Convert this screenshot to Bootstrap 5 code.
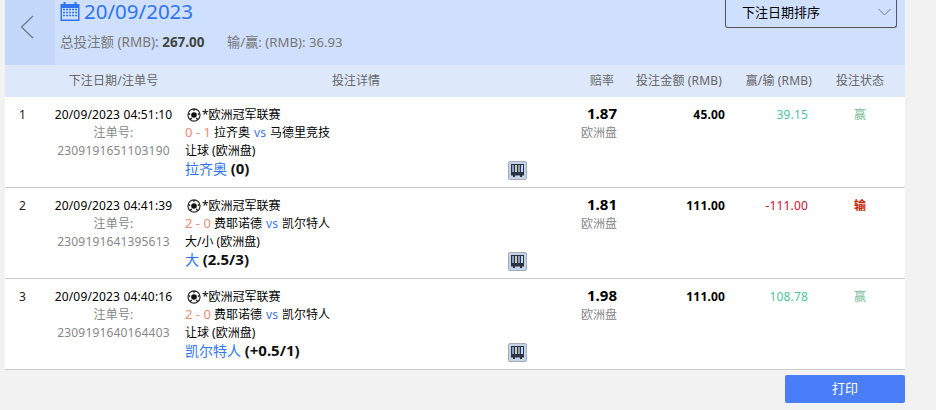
<!DOCTYPE html>
<html lang="zh"><head><meta charset="utf-8">
<link href="https://cdn.jsdelivr.net/npm/bootstrap@5.3.0/dist/css/bootstrap.min.css" rel="stylesheet">
<style>
html,body{height:100%;overflow:hidden}
body{background:#f2f2f2;font-family:"Noto Sans","Noto Sans CJK SC",sans-serif;font-size:12px;line-height:18px;color:#000}
.shell{width:900px;margin-left:5px}
.hero{height:65px;background:#cfe0fe}
.backbtn{width:50px;background:#c3d8fa;padding:0 6px 12px 0}
.main-col{padding-left:5px}
.herotitle{color:#2e74f0;font-size:20.5px;line-height:22px}
.herostats{color:#777;font-size:13.5px;line-height:20px;margin-top:10px}
.herostats b{color:#444;margin-right:19px}
.herostats i{font-style:normal;font-size:13.2px}
.sorter{width:172px;height:28px;border:1px solid #555;border-top:0;border-radius:0 0 3px 3px;margin-right:8px;padding:0 5px 3px 16px;font-size:13px}
.cols{display:grid;grid-template-columns:37px 143px 342px 93px 105px 90px 90px}
.headrow{height:32px;background:#dde8fb;color:#666;line-height:32px}
.betrow{height:91px;background:#fff;border-bottom:1px solid #ccc;padding-top:9px}
.idx{padding-left:14px;color:#222}
.muted{color:#888}
.num{letter-spacing:.16px}
.sc{color:#f08a70;font-size:13px;line-height:1}
.vs{color:#3a78e8;font-size:12px;margin:0 1px;line-height:1}
.pick{color:#2e74f0;font-size:14px;line-height:18px}
.pick b{color:#111;font-size:15px;line-height:1}
.detail{position:relative}
.ballico{margin-left:2px;margin-right:1px;vertical-align:-3px}
.tvbtn{position:absolute;right:0;bottom:7px;width:19px;height:19px;display:block}
.odd{font-size:15px;font-weight:700;line-height:18px;margin-top:-2px;margin-bottom:2px}
.won{color:#4fc3a0}.lost{color:#c8102e}
.st-won{color:#7fbf9f}.st-lost{color:#c81f00;font-weight:600}
.pr1{padding-right:3px}.pr6{padding-right:6px}.pr7{padding-right:7px}
.printrow{margin-top:5px}
.printbtn{width:120px;height:28px;background:#4a7ef8;border:0;border-radius:2px;font-size:13px;color:#fff;padding:0}
.printbtn:hover{background:#4a7ef8;color:#fff}
</style></head><body>
<svg width="0" height="0" class="d-block"><defs>
<symbol id="ball" viewBox="0 0 15 15"><circle cx="7.500" cy="7.500" r="6.500" fill="#fff" stroke="#222" stroke-width="1.200"/><circle cx="7.500" cy="7.500" r="3" fill="#111"/><path d="M7.500 1v2M1.500 6l2 .8M13.500 6l-2 .8M3.500 12.500l1.500-2M11.500 12.500l-1.500-2" stroke="#111" stroke-width="1.500"/></symbol>
<symbol id="tv" viewBox="0 0 19 19"><rect x=".5" y=".5" width="18" height="18" rx="1.500" fill="#c4d2ea" stroke="#a5aab5"/><rect x="3" y="3" width="13" height="9" fill="#2c3340"/><rect x="4" y="4" width="2" height="7" fill="#7fa0d0"/><rect x="7" y="4" width="2" height="7" fill="#d9c9a0"/><rect x="10" y="4" width="2" height="7" fill="#7fa0d0"/><rect x="13" y="4" width="2" height="7" fill="#c9d6ea"/><path d="M3 12h13v2.500H14V16h-2v-1.500H7V16H5v-1.500H3z" fill="#2c3340"/></symbol>
</defs></svg>
<div class="shell">
<div class="hero d-flex">
  <div class="backbtn d-flex align-items-center justify-content-center"><svg width="14" height="24" viewBox="0 0 14 24"><path d="M13 1 1.500 12 13 23" fill="none" stroke="#6f7f95" stroke-width="1.400"/></svg></div>
  <div class="flex-grow-1 main-col">
    <div class="herotitle d-flex align-items-center"><svg width="20" height="19" viewBox="0 0 20 19" class="me-1"><rect x="0.5" y="2" width="19" height="17" fill="#2e74f0"/><rect x="2" y="6" width="16" height="11.500" fill="#cfe0fe"/><path d="M3.500 0h2v3.500h-2zM14.500 0h2v3.500h-2z" fill="#2e74f0"/><path d="M3 7.500h14M3 10.500h14M3 13.500h14" stroke="#2e74f0" stroke-width="1.600" stroke-dasharray="2 1"/></svg><span>20/09/2023</span></div>
    <div class="herostats">总投注额 (RMB): <b>267.00</b> <i>输/赢: (RMB): 36.93</i></div>
  </div>
  <div class="sorter d-flex align-items-center justify-content-between"><span>下注日期排序</span><svg width="13" height="8" viewBox="0 0 13 8"><path d="M.5 1l6 6 6-6" fill="none" stroke="#778" stroke-width="1"/></svg></div>
</div>
<div class="cols headrow">
  <div></div><div class="text-center num">下注日期/注单号</div><div class="text-center">投注详情</div>
  <div class="text-end pr6">赔率</div><div class="text-end pr1 num">投注金额 (RMB)</div><div class="text-end pr1 num">赢/输 (RMB)</div><div class="text-center">投注状态</div>
</div>
<div class="cols betrow">
  <div class="idx">1</div>
  <div class="text-center num"><div>20/09/2023 04:51:10</div><div class="muted">注单号:</div><div class="muted">2309191651103190</div></div>
  <div class="detail"><div><svg width="14" height="14" class="ballico"><use href="#ball"/></svg>*欧洲冠军联赛</div><div><span class="sc">0 - 1</span> 拉齐奥 <span class="vs">vs</span> 马德里竞技</div><div>让球 (欧洲盘)</div><div class="pick">拉齐奥 <b>(0)</b></div><svg class="tvbtn"><use href="#tv"/></svg></div>
  <div class="text-end pr1"><div class="odd">1.87</div><div class="muted">欧洲盘</div></div>
  <div class="text-end fw-bold num">45.00</div>
  <div class="text-end pr7 won num">39.15</div>
  <div class="text-center st-won">赢</div>
</div>
<div class="cols betrow">
  <div class="idx">2</div>
  <div class="text-center num"><div>20/09/2023 04:41:39</div><div class="muted">注单号:</div><div class="muted">2309191641395613</div></div>
  <div class="detail"><div><svg width="14" height="14" class="ballico"><use href="#ball"/></svg>*欧洲冠军联赛</div><div><span class="sc">2 - 0</span> 费耶诺德 <span class="vs">vs</span> 凯尔特人</div><div>大/小 (欧洲盘)</div><div class="pick">大 <b>(2.5/3)</b></div><svg class="tvbtn"><use href="#tv"/></svg></div>
  <div class="text-end pr1"><div class="odd">1.81</div><div class="muted">欧洲盘</div></div>
  <div class="text-end fw-bold num">111.00</div>
  <div class="text-end pr7 lost num">-111.00</div>
  <div class="text-center st-lost">输</div>
</div>
<div class="cols betrow">
  <div class="idx">3</div>
  <div class="text-center num"><div>20/09/2023 04:40:16</div><div class="muted">注单号:</div><div class="muted">2309191640164403</div></div>
  <div class="detail"><div><svg width="14" height="14" class="ballico"><use href="#ball"/></svg>*欧洲冠军联赛</div><div><span class="sc">2 - 0</span> 费耶诺德 <span class="vs">vs</span> 凯尔特人</div><div>让球 (欧洲盘)</div><div class="pick">凯尔特人 <b>(+0.5/1)</b></div><svg class="tvbtn"><use href="#tv"/></svg></div>
  <div class="text-end pr1"><div class="odd">1.98</div><div class="muted">欧洲盘</div></div>
  <div class="text-end fw-bold num">111.00</div>
  <div class="text-end pr7 won num">108.78</div>
  <div class="text-center st-won">赢</div>
</div>
<div class="d-flex justify-content-end printrow"><button class="btn printbtn">打印</button></div>
</div>
<script src="https://cdn.jsdelivr.net/npm/bootstrap@5.3.0/dist/js/bootstrap.bundle.min.js"></script>
</body></html>
